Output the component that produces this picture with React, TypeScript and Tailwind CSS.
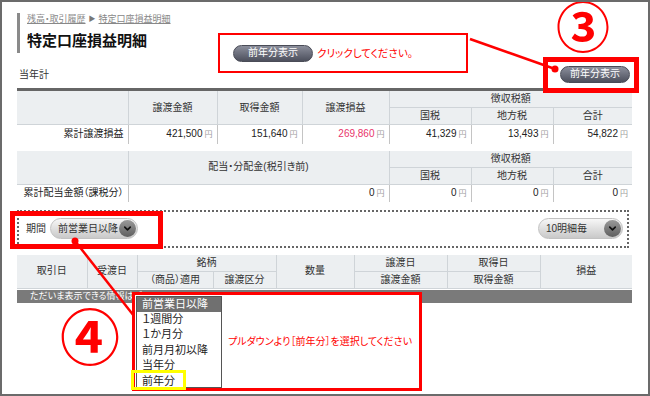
import { ChevronDown } from "lucide-react"

const th =
  "bg-[#eceff1] border-r border-b border-[#cfd4d8] text-[10px] font-normal text-[#333] p-0 text-center leading-none"
const td = "border-r border-[#c4c4c4] text-right pr-[4px] text-[10px] text-[#222] p-0 leading-none"

function Yen({ v, red }: { v: string; red?: boolean }) {
  return (
    <>
      <span className={red ? "text-[#e8336b]" : ""}>{v}</span>
      <span className="ml-[2px] text-[8px] text-[#9a9a9a]">円</span>
    </>
  )
}

function DarkButton({ label, w }: { label: string; w: string }) {
  return (
    <div
      className={`${w} flex h-[17px] items-center justify-center rounded-full border border-[#4a4c57] bg-linear-to-b from-[#8c8f9c] to-[#4d505d] text-[10px] leading-none text-white`}
    >
      {label}
    </div>
  )
}

function Pill({ label, w }: { label: string; w: string }) {
  return (
    <div
      className={`${w} flex h-[21px] items-center justify-between rounded-full border border-[#c2c2c2] bg-linear-to-b from-[#f7f7f7] to-[#c9c9c9] pl-[7px] pr-[1px]`}
    >
      <span className="whitespace-nowrap text-[10px] leading-none text-[#333]">{label}</span>
      <span className="flex h-[17px] w-[17px] shrink-0 items-center justify-center rounded-full bg-linear-to-b from-[#9a9a9a] to-[#5f5f5f]">
        <ChevronDown size={11} strokeWidth={3.5} color="#111" />
      </span>
    </div>
  )
}

export default function App() {
  return (
    <div className="relative h-[396px] w-[650px] overflow-hidden bg-white font-['Liberation_Sans','Noto_Sans_CJK_JP',sans-serif] text-[#222] [font-feature-settings:'palt']">
      <div className="pl-[17px] pr-[18px] pt-[13px]">
        {/* heading */}
        <div className="h-[40px] border-l-[3px] border-[#8a8a8a] pl-[7px]">
          <div className="flex items-center gap-[3px] text-[9px] leading-[12px] text-[#888]">
            <span className="underline">残高・取引履歴</span>
            <span className="text-[7px] text-[#777]">▶</span>
            <span className="underline">特定口座損益明細</span>
          </div>
          <div className="mt-[6px] text-[15px] font-bold leading-[20px] text-[#111]">特定口座損益明細</div>
        </div>

        <div className="mt-[12px] flex h-[18px] items-center justify-between">
          <span className="pl-[2px] text-[10px] text-[#333]">当年計</span>
          <div className="mr-[2px]">
            <DarkButton label="前年分表示" w="w-[70px]" />
          </div>
        </div>

        {/* table 1 */}
        <table className="mt-[5px] w-full table-fixed border-collapse border-t-[3px] border-[#666]">
          <colgroup>
            <col className="w-[111px]" />
            <col className="w-[89px]" />
            <col className="w-[85px]" />
            <col className="w-[87px]" />
            <col className="w-[82px]" />
            <col className="w-[82px]" />
            <col className="w-[79px]" />
          </colgroup>
          <thead>
            <tr className="h-[18px]">
              <th rowSpan={2} className={th}></th>
              <th rowSpan={2} className={th}>譲渡金額</th>
              <th rowSpan={2} className={th}>取得金額</th>
              <th rowSpan={2} className={th}>譲渡損益</th>
              <th colSpan={3} className={`${th} border-r-0`}>徴収税額</th>
            </tr>
            <tr className="h-[17px]">
              <th className={th}>国税</th>
              <th className={th}>地方税</th>
              <th className={`${th} border-r-0`}>合計</th>
            </tr>
          </thead>
          <tbody>
            <tr className="h-[19px]">
              <td className={`${td} pl-[2px] text-left`}>累計譲渡損益</td>
              <td className={td}><Yen v="421,500" /></td>
              <td className={td}><Yen v="151,640" /></td>
              <td className={td}><Yen v="269,860" red /></td>
              <td className={td}><Yen v="41,329" /></td>
              <td className={td}><Yen v="13,493" /></td>
              <td className={`${td} border-r-0`}><Yen v="54,822" /></td>
            </tr>
          </tbody>
        </table>

        {/* table 2 */}
        <table className="mt-[7px] w-full table-fixed border-collapse">
          <colgroup>
            <col className="w-[111px]" />
            <col className="w-[261px]" />
            <col className="w-[82px]" />
            <col className="w-[82px]" />
            <col className="w-[79px]" />
          </colgroup>
          <thead>
            <tr className="h-[17px]">
              <th rowSpan={2} className={th}></th>
              <th rowSpan={2} className={th}>配当・分配金(税引き前)</th>
              <th colSpan={3} className={`${th} border-r-0`}>徴収税額</th>
            </tr>
            <tr className="h-[17px]">
              <th className={th}>国税</th>
              <th className={th}>地方税</th>
              <th className={`${th} border-r-0`}>合計</th>
            </tr>
          </thead>
          <tbody>
            <tr className="h-[17px]">
              <td className={`${td} pl-[2px] text-left`}>累計配当金額（課税分）</td>
              <td className={td}><Yen v="0" /></td>
              <td className={td}><Yen v="0" /></td>
              <td className={td}><Yen v="0" /></td>
              <td className={`${td} border-r-0`}><Yen v="0" /></td>
            </tr>
          </tbody>
        </table>

        {/* period filter */}
        <div className="mr-[3px] mt-[8px] flex h-[38px] items-center justify-between border-2 border-dotted border-[#666] pl-[7px] pr-[4px]">
          <div className="flex items-center gap-[4px]">
            <span className="text-[10px] text-[#333]">期間</span>
            <Pill label="前営業日以降" w="w-[88px]" />
          </div>
          <Pill label="10明細毎" w="w-[85px]" />
        </div>

        {/* table 3 */}
        <table className="mt-[7px] w-full table-fixed border-collapse">
          <colgroup>
            <col className="w-[70px]" />
            <col className="w-[50px]" />
            <col className="w-[76px]" />
            <col className="w-[63px]" />
            <col className="w-[78px]" />
            <col className="w-[93px]" />
            <col className="w-[93px]" />
            <col className="w-[92px]" />
          </colgroup>
          <thead>
            <tr className="h-[17px]">
              <th rowSpan={2} className={th}>取引日</th>
              <th rowSpan={2} className={th}>受渡日</th>
              <th colSpan={2} className={th}>銘柄</th>
              <th rowSpan={2} className={th}>数量</th>
              <th className={th}>譲渡日</th>
              <th className={th}>取得日</th>
              <th rowSpan={2} className={`${th} border-r-0`}>損益</th>
            </tr>
            <tr className="h-[17px]">
              <th className={th}>（商品）適用</th>
              <th className={th}>譲渡区分</th>
              <th className={th}>譲渡金額</th>
              <th className={th}>取得金額</th>
            </tr>
          </thead>
        </table>
        <div className="mt-[1px] flex h-[13px] items-center bg-[#7a7a7a] pl-[13px] text-[9px] leading-none text-white">
          ただいま表示できる情報はご
        </div>
      </div>

      {/* annotation lines */}
      <svg className="pointer-events-none absolute left-0 top-0" width="650" height="396">
        <line x1="470" y1="39" x2="555" y2="69" stroke="#ff0000" strokeWidth="2.5" />
        <circle cx="555" cy="69" r="3.5" fill="#ff0000" />
        <line x1="75" y1="241" x2="134" y2="316" stroke="#ff0000" strokeWidth="2.5" />
        <circle cx="75" cy="241" r="3.5" fill="#ff0000" />
      </svg>

      {/* callout 3 */}
      <div className="absolute left-[218px] top-[33px] flex h-[40px] w-[250px] items-center gap-[4px] border-2 border-[#ff0000] bg-white pl-[13px]">
        <DarkButton label="前年分表示" w="w-[80px]" />
        <span className="text-[10.5px] leading-none text-[#ff0000]">クリックしてください。</span>
      </div>
      <div className="absolute left-[543px] top-[57px] h-[36px] w-[96px] border-[5px] border-[#ff0000]" />
      <div className="absolute left-[556px] top-[2px] text-[54px] font-bold leading-none text-[#ff0000]">③</div>

      {/* callout 4 */}
      <div className="absolute left-[10px] top-[211px] h-[38px] w-[153px] border-[5px] border-[#ff0000]" />
      <div className="absolute left-[132px] top-[292px] flex h-[99px] w-[290px] border-[3px] border-[#ff0000] bg-white pl-[1px] pt-[1px]">
        <div className="h-[92px] w-[86px] border border-[#555] text-[11px] leading-[15px] text-[#222]">
          <div className="h-[15px] bg-[#707070] pl-[5px] text-white">前営業日以降</div>
          <div className="h-[15.4px] pl-[5px]">１週間分</div>
          <div className="h-[15.4px] pl-[5px]">１か月分</div>
          <div className="h-[15.4px] pl-[5px]">前月月初以降</div>
          <div className="h-[15.4px] pl-[5px]">当年分</div>
          <div className="h-[15.4px] pl-[5px]">前年分</div>
        </div>
        <div className="ml-[6px] self-center text-[10px] leading-none text-[#ff0000]">
          プルダウンより［前年分］を選択してください
        </div>
      </div>
      <div className="absolute left-[131px] top-[370px] h-[20px] w-[55px] border-[3px] border-[#ffff00]" />
      <div className="absolute left-[60px] top-[310px] text-[60px] font-bold leading-none text-[#ff0000]">④</div>

      <div className="pointer-events-none absolute inset-0 border-2 border-[#6b6b6b]" />
    </div>
  )
}
